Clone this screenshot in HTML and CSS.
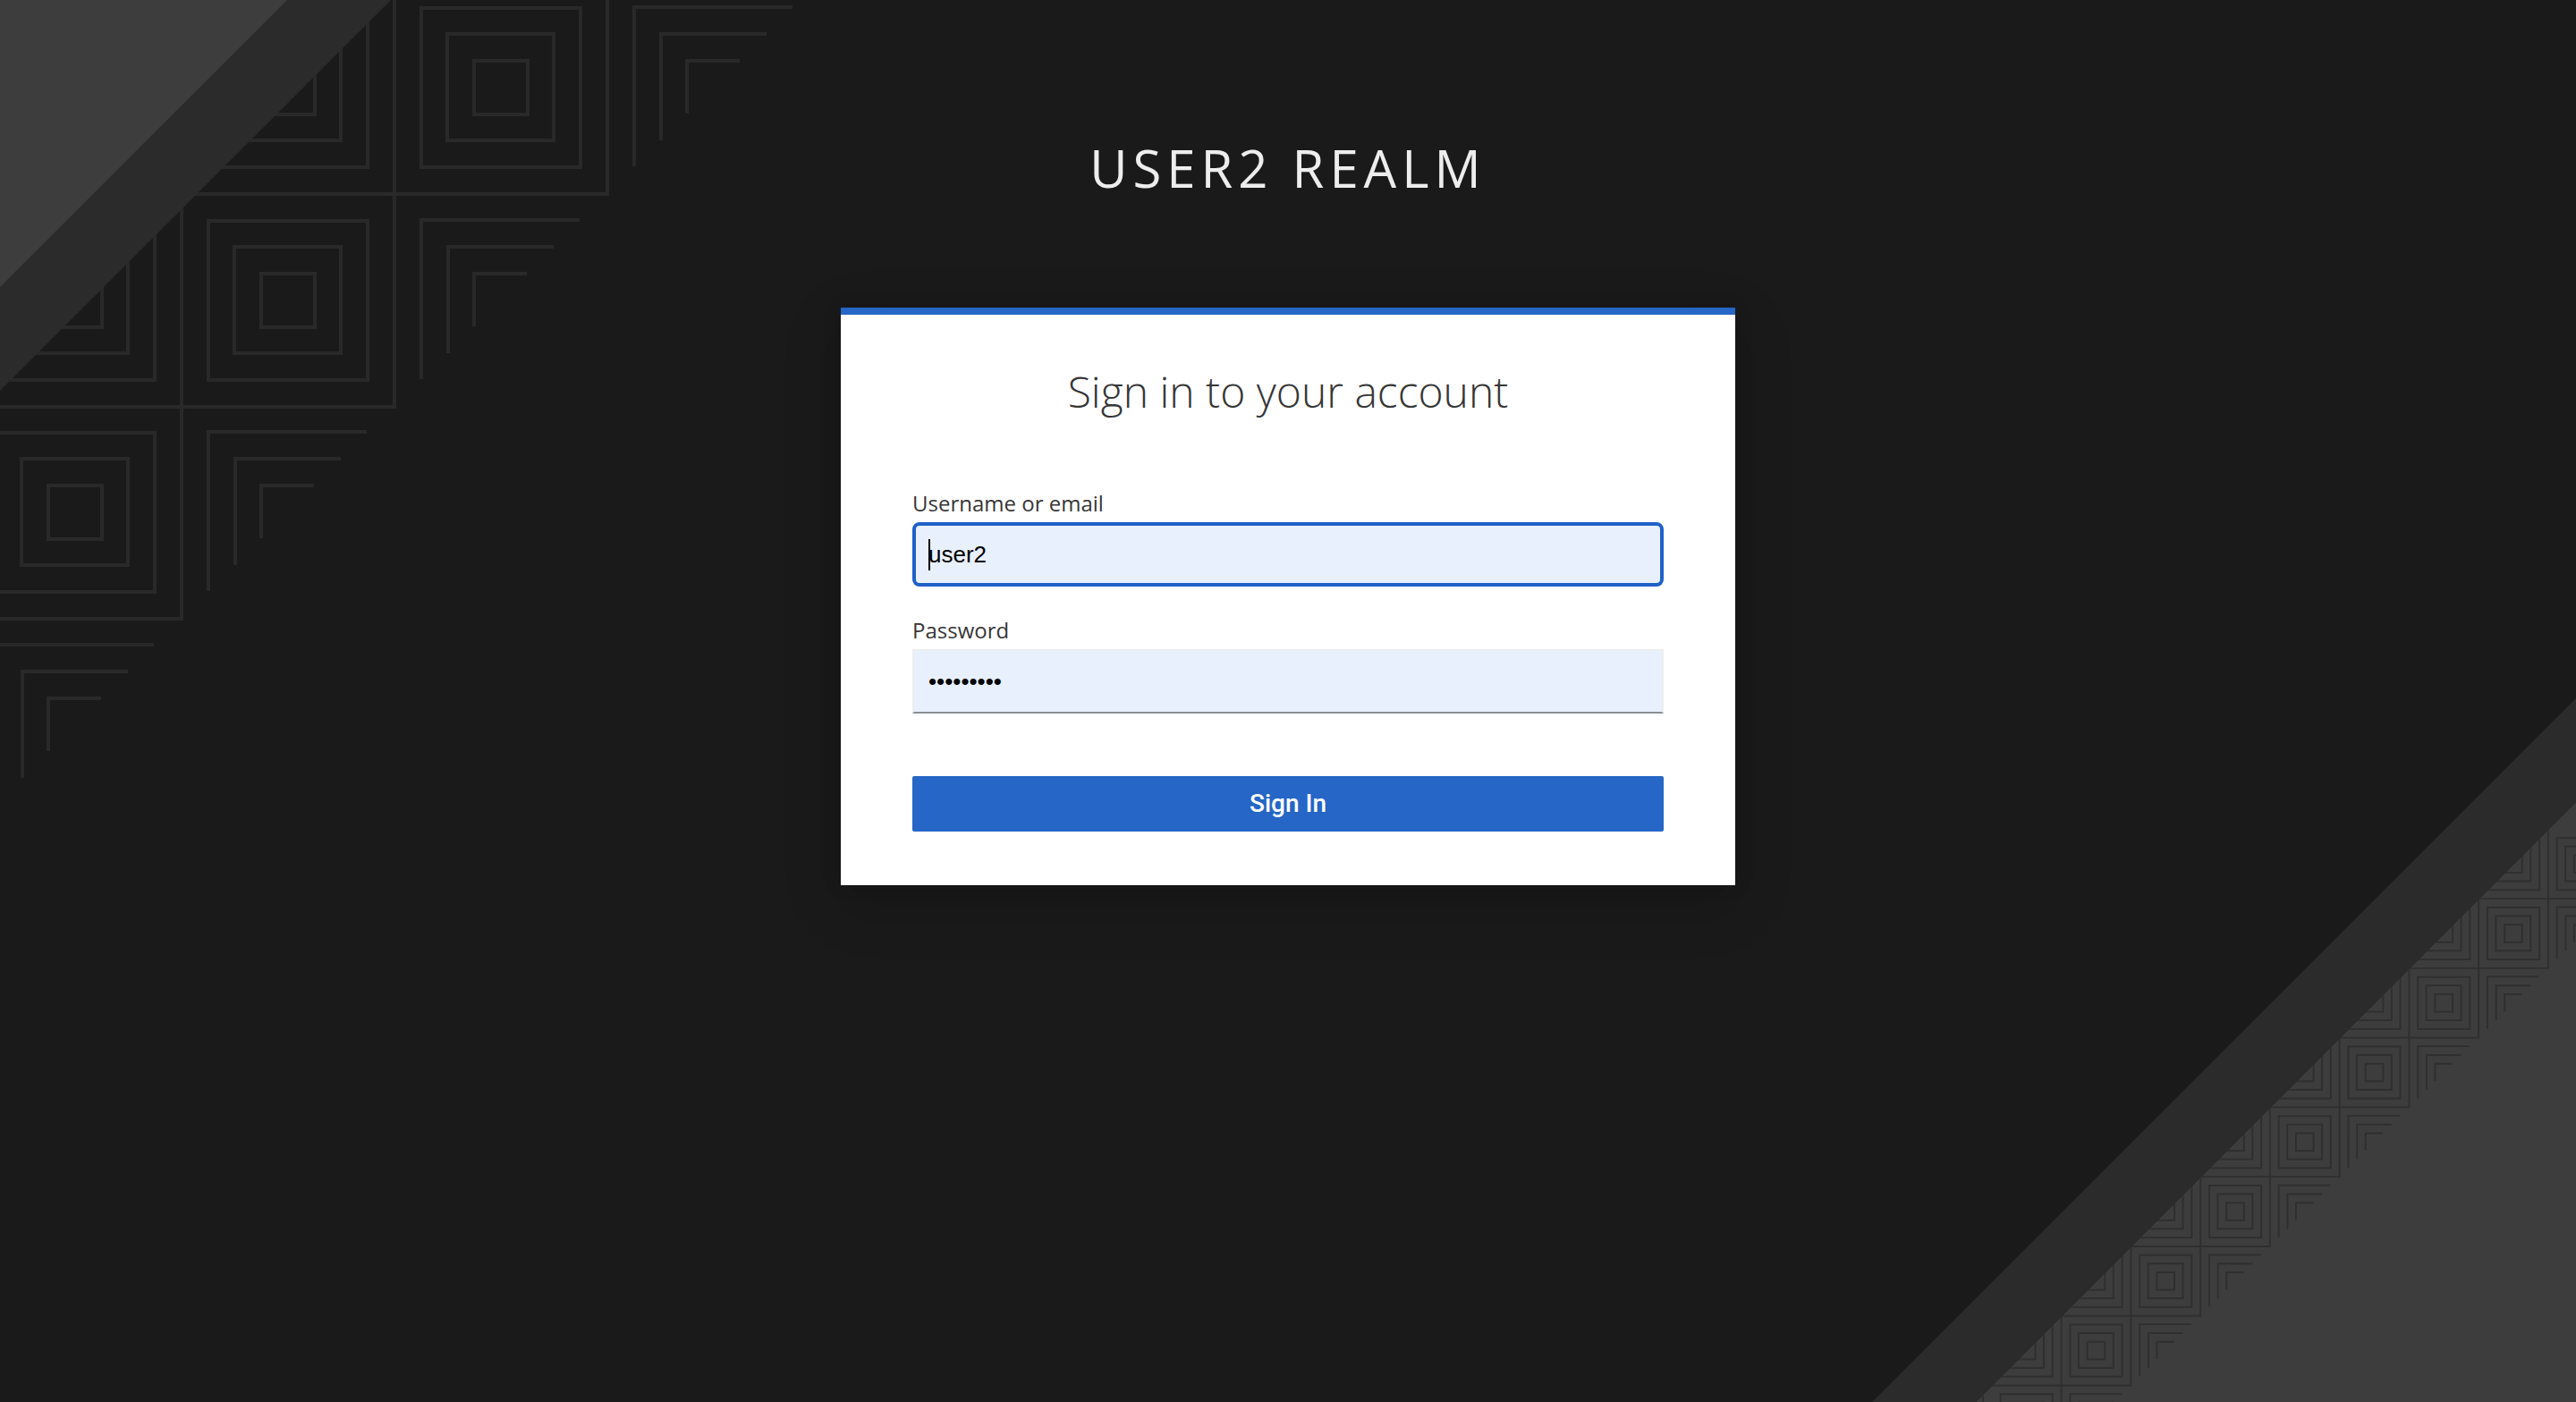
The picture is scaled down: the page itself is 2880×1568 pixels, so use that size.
FILE: index.html
```html
<!DOCTYPE html>
<html lang="en">
<head>
  <meta charset="utf-8">
  <meta name="viewport" content="width=device-width, initial-scale=1">
  <title>Sign in to USER2 REALM</title>
  <link rel="stylesheet" href="styles.css">
</head>
<body class="login">
  <svg class="corner corner-top" viewBox="0 0 900 900" aria-hidden="true">
    <defs>
      <g id="squares">
        <rect x="-30" y="-30" width="60" height="60"/>
        <rect x="-60" y="-60" width="119" height="119"/>
        <rect x="-89" y="-89" width="178" height="178"/>
      </g>
      <g id="step">
        <use href="#squares"/>
        <use href="#squares" x="-238"/>
        <path d="M-357 119H119V-357"/>
        <path d="M149 88V-90H326M179 59V-60H297M208 29V-30H267"/>
      </g>
    </defs>
    <g class="lines">
      <use href="#step" x="560" y="98"/>
      <use href="#step" x="322" y="336"/>
      <use href="#step" x="84" y="573"/>
      <use href="#step" x="-154" y="811"/>
    </g>
    <path class="band" d="M0 0H437L0 437Z"/>
    <path class="panel" d="M0 0H321L0 321Z"/>
  </svg>
  <svg class="corner corner-bottom" viewBox="0 0 800 800" aria-hidden="true">
    <path class="panel" d="M800 129V800H129Z"/>
    <g class="lines" transform="translate(730 276) scale(.3267)">
      <use href="#step" x="238" y="-238"/>
      <use href="#step"/>
      <use href="#step" x="-238" y="238"/>
      <use href="#step" x="-476" y="476"/>
      <use href="#step" x="-714" y="714"/>
      <use href="#step" x="-952" y="952"/>
      <use href="#step" x="-1190" y="1190"/>
      <use href="#step" x="-1428" y="1428"/>
      <use href="#step" x="-1666" y="1666"/>
    </g>
    <path class="band" d="M800 13V129L129 800H13Z"/>
  </svg>

  <header class="realm">
    <h1 class="realm-name">USER2 REALM</h1>
  </header>

  <main class="card">
    <h2 class="card-title">Sign in to your account</h2>
    <form class="form">
      <div class="field">
        <label class="label" for="username">Username or email</label>
        <input class="input input-active" id="username" name="username" type="text" value="user2">
      </div>
      <div class="field">
        <label class="label" for="password">Password</label>
        <input class="input" id="password" name="password" type="password" value="user2pass">
      </div>
      <button class="submit" type="submit">Sign In</button>
    </form>
  </main>
</body>
</html>
```
FILE: styles.css
```css
* {
  box-sizing: border-box;
}

.login {
  position: relative;
  display: flex;
  flex-direction: column;
  align-items: center;
  min-height: 100vh;
  margin: 0;
  overflow: hidden;
  background: #1a1a1a;
  font-family: "Open Sans", sans-serif;
}

/* Decorative corners behind the form */
.corner {
  position: absolute;
  fill: none;
}

.corner-top {
  top: 0;
  left: 0;
  width: 900px;
}

.corner-bottom {
  right: 0;
  bottom: 0;
  width: 800px;
}

.band {
  fill: #2b2b2b;
}

.panel {
  fill: #3d3d3d;
}

.corner-top .lines {
  stroke: #292929;
  stroke-width: 4;
}

.corner-bottom .lines {
  stroke: #2f2f2f;
  stroke-width: 6;
}

.realm {
  position: relative;
  padding: 148px 40px 116px;
}

.realm-name {
  margin: 0;
  color: #ededed;
  font-size: 58px;
  font-weight: 400;
  line-height: 80px;
  letter-spacing: 6px;
  text-align: center;
}

.card {
  position: relative;
  width: 100%;
  max-width: 1000px;
  padding: 53px 80px 60px;
  border-top: 8px solid #2566c6;
  background: #fff;
  box-shadow: 0 20px 60px rgba(3, 3, 3, .18), 0 0 20px rgba(3, 3, 3, .12);
}

.card-title {
  margin: 0 0 73px;
  color: #363636;
  font-size: 48px;
  font-weight: 300;
  line-height: 66px;
  text-align: center;
}

.form {
  display: flex;
  flex-direction: column;
  gap: 30px;
}

.field {
  display: flex;
  flex-direction: column;
  gap: 2px;
}

.label {
  color: #363636;
  font-size: 24px;
  line-height: 38px;
}

.input {
  width: 100%;
  height: 72px;
  padding: 0 16px;
  border: 2px solid #ededed;
  border-bottom-color: #8a8d90;
  border-radius: 0;
  outline: none;
  background: #e8f0fe;
  color: #000;
  font-family: "Liberation Sans", Arial, sans-serif;
  font-size: 26px;
}

/* The active field shows its text cursor at the start of the value */
.input-active {
  padding: 0 14px;
  border: 4px solid #2061c8;
  border-radius: 8px;
  background: linear-gradient(#000, #000) 14px 50% / 2px 35px no-repeat #e8f0fe;
}

.submit {
  height: 62px;
  margin-top: 40px;
  padding: 0 16px;
  border: 0;
  border-radius: 2px;
  background: #2566c6;
  color: #fff;
  font-family: Roboto, sans-serif;
  font-size: 28px;
  font-weight: 500;
  line-height: 36px;
}
```
